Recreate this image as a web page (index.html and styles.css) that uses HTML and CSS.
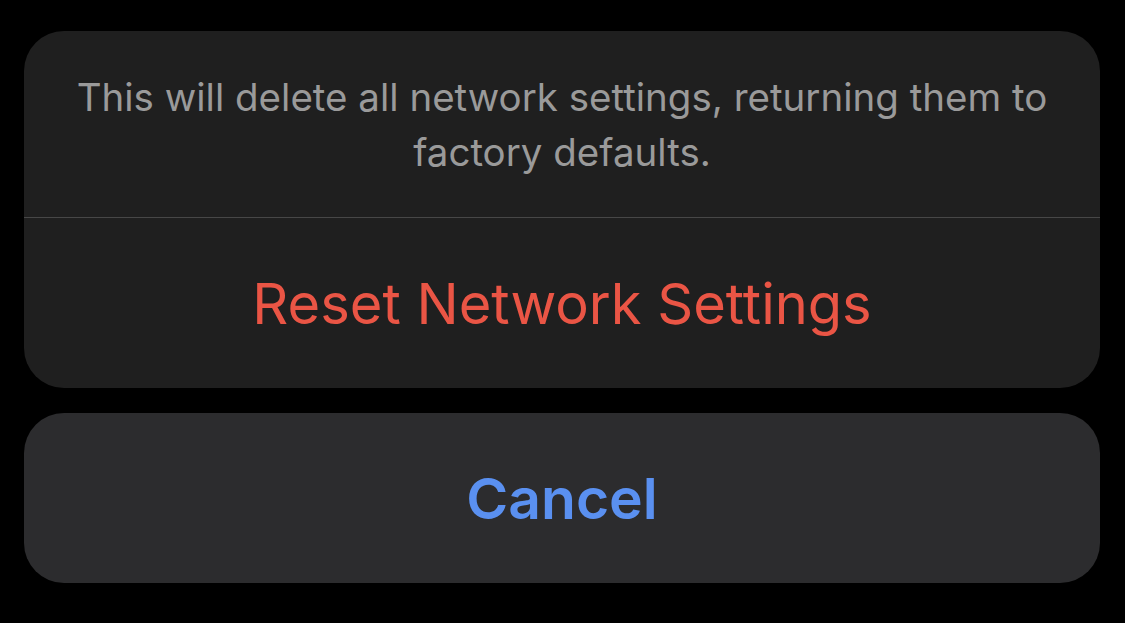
FILE: index.html
```html
<!DOCTYPE html>
<html lang="en">
<head>
<meta charset="UTF-8">
<meta name="viewport" content="width=device-width, initial-scale=1.0">
<title>Reset Network Settings</title>
<link rel="stylesheet" href="styles.css">
</head>
<body>
<div class="sheet">
  <div class="group">
    <p class="message">This will delete all network settings, returning them to factory defaults.</p>
    <button class="action destructive">Reset Network Settings</button>
  </div>
  <button class="cancel">Cancel</button>
</div>
</body>
</html>
```

FILE: styles.css
```css
body {
  margin: 0;
  background: #000;
  font-family: Inter, "Noto Sans", sans-serif;
  height: 100vh;
}

.sheet {
  padding: 31px 25px 0 24px;
  display: flex;
  flex-direction: column;
  gap: 25px;
}

.group {
  background: #1f1f1f;
  border-radius: 40px;
  display: flex;
  flex-direction: column;
  overflow: hidden;
}

.message {
  margin: 0;
  height: 187px;
  padding: 2px 30px 0;
  box-sizing: border-box;
  display: flex;
  align-items: center;
  justify-content: center;
  text-align: center;
  color: #9a9a9a;
  font-size: 38.5px;
  line-height: 55px;
  border-bottom: 1px solid #474747;
}

button {
  font-family: inherit;
  border: none;
  background: none;
  width: 100%;
  cursor: pointer;
}

.action {
  height: 170px;
  padding-top: 2px;
  font-size: 56px;
  color: #ea5545;
}

.cancel {
  height: 170px;
  background: #2c2c2e;
  border-radius: 40px;
  font-size: 57px;
  font-weight: 600;
  color: #5a90f0;
}
```
